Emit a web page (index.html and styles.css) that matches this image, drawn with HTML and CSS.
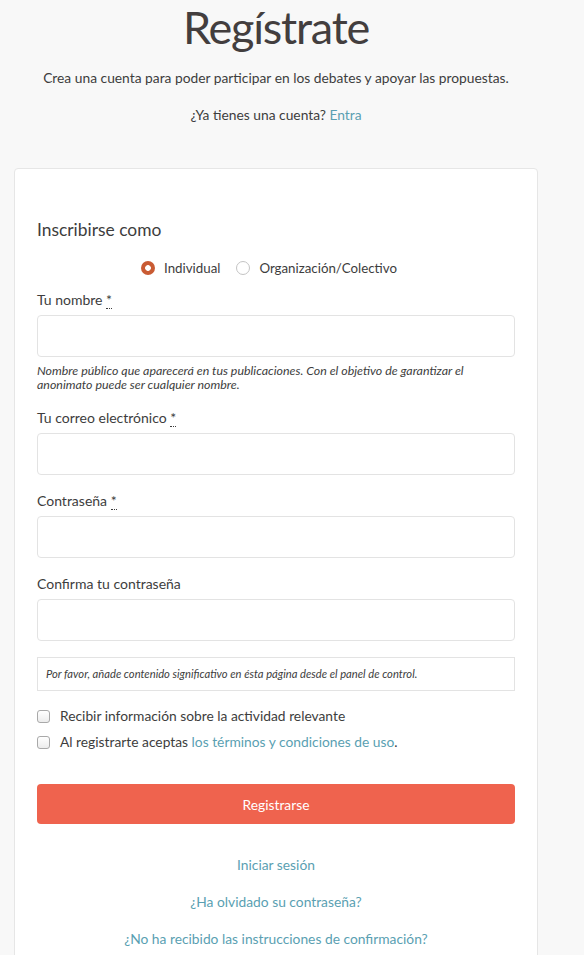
FILE: index.html
```html
<!DOCTYPE html>
<html lang="es">
<head>
<meta charset="utf-8">
<link rel="stylesheet" href="styles.css">
</head>
<body>
<div class="page">
  <header class="intro">
    <h1 class="title">Regístrate</h1>
    <p class="lead">Crea una cuenta para poder participar en los debates y apoyar las propuestas.</p>
    <p class="have">¿Ya tienes una cuenta? <a class="link" href="#">Entra</a></p>
  </header>
  <div class="card">
    <h2 class="section">Inscribirse como</h2>
    <div class="radios">
      <label class="radio"><span class="rdot on"></span>Individual</label>
      <label class="radio"><span class="rdot"></span>Organización/Colectivo</label>
    </div>
    <div class="field">
      <label class="lbl">Tu nombre <abbr class="req">*</abbr></label>
      <div class="input"></div>
      <p class="help">Nombre público que aparecerá en tus publicaciones. Con el objetivo de garantizar el anonimato puede ser cualquier nombre.</p>
    </div>
    <div class="field">
      <label class="lbl">Tu correo electrónico <abbr class="req">*</abbr></label>
      <div class="input"></div>
    </div>
    <div class="field">
      <label class="lbl">Contraseña <abbr class="req">*</abbr></label>
      <div class="input"></div>
    </div>
    <div class="field">
      <label class="lbl">Confirma tu contraseña</label>
      <div class="input"></div>
    </div>
    <div class="notice">Por favor, añade contenido significativo en ésta página desde el panel de control.</div>
    <div class="checks">
      <label class="check"><span class="cbox"></span>Recibir información sobre la actividad relevante</label>
      <label class="check"><span class="cbox"></span>Al registrarte aceptas&nbsp;<a class="link" href="#">los términos y condiciones de uso</a>.</label>
    </div>
    <button class="btn" type="button">Registrarse</button>
    <nav class="links">
      <a class="link" href="#">Iniciar sesión</a>
      <a class="link" href="#">¿Ha olvidado su contraseña?</a>
      <a class="link" href="#">¿No ha recibido las instrucciones de confirmación?</a>
    </nav>
  </div>
</div>
</body>
</html>
```
FILE: styles.css
```css
* { box-sizing: border-box; }
html, body { margin: 0; padding: 0; }
body {
  background: #f8f8f8;
  font-family: "Lato", "Open Sans", sans-serif;
  color: #3d3d3d;
  overflow: hidden;
}
.page {
  width: 524px;
  margin-left: 14px;
}
.intro { text-align: center; }
.title {
  margin: 0;
  padding-top: 2px;
  font-size: 45px;
  font-weight: 400;
  line-height: 50px;
  letter-spacing: -1.2px;
  color: #433e3e;
}
.lead {
  margin: 15px 0 0;
  font-size: 13.8px;
  line-height: 22px;
}
.have {
  margin: 15px 0 0;
  font-size: 13.8px;
  line-height: 22px;
}
.link { color: #5a9fb2; text-decoration: none; }
.card {
  margin-top: 42px;
  background: #fff;
  border: 1px solid #e6e6e6;
  border-radius: 4px;
  padding: 48px 22px 40px;
}
.section {
  margin: 0;
  font-size: 17.4px;
  font-weight: 400;
  line-height: 26px;
}
.radios {
  display: flex;
  justify-content: center;
  gap: 16px;
  margin-top: 14px;
  padding-right: 14px;
  font-size: 13.3px;
  line-height: 22px;
}
.radio { display: flex; align-items: center; gap: 9px; }
.rdot {
  width: 14px; height: 14px;
  border-radius: 50%;
  border: 1px solid #c4c4c4;
  background: #fff;
  display: inline-block;
}
.rdot.on {
  border: none;
  background: radial-gradient(circle, #fff 0 2.5px, #c95b33 3.2px);
}
.field { margin-top: 11px; }
.field + .field { margin-top: 16px; }
.lbl {
  display: block;
  font-size: 14px;
  line-height: 20px;
}
.req {
  text-decoration: none;
  border-bottom: 1px dotted #3d3d3d;
}
.input {
  margin-top: 5px;
  height: 42px;
  border: 1px solid #e3e3e3;
  border-radius: 4px;
  background: #fff;
}
.help {
  margin: 7px 0 0;
  font-size: 12.4px;
  line-height: 14px;
  font-style: italic;
}
.notice {
  margin-top: 16px;
  border: 1px solid #e3e3e3;
  padding: 8px 8px;
  font-size: 11.2px;
  line-height: 16px;
  font-style: italic;
}
.checks {
  margin-top: 14px;
  display: flex;
  flex-direction: column;
  gap: 4px;
}
.check {
  display: flex;
  align-items: center;
  font-size: 13.8px;
  line-height: 22px;
}
.cbox {
  width: 13px; height: 13px;
  border: 1px solid #a9a9a9;
  border-radius: 3px;
  background: linear-gradient(#fff, #ececec);
  margin-right: 10px;
  flex: none;
}
.btn {
  display: block;
  width: 100%;
  margin-top: 31px;
  height: 40px;
  border: none;
  border-radius: 4px;
  background: #ef634e;
  color: #fff;
  font-family: inherit;
  font-size: 13.8px;
}
.links {
  margin-top: 30px;
  display: flex;
  flex-direction: column;
  align-items: center;
  gap: 15px;
  font-size: 13.8px;
  line-height: 22px;
}
```
